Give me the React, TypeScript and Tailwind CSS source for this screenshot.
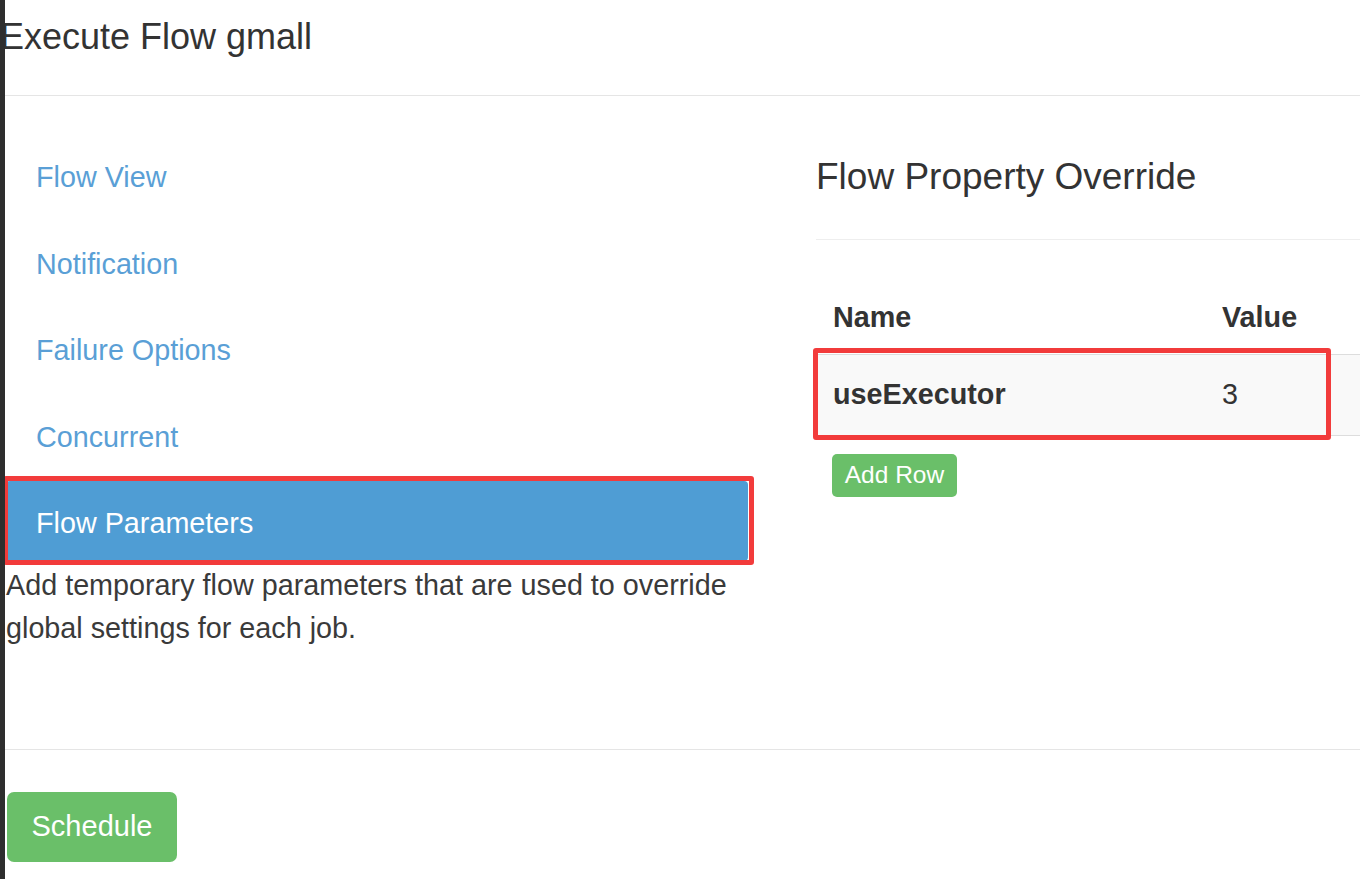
import React from 'react';

const navItems = ['Flow View', 'Notification', 'Failure Options', 'Concurrent', 'Flow Parameters'];

const App: React.FC = () => {
  const active = 'Flow Parameters';

  return (
    <div className="relative h-[879px] w-[1360px] overflow-hidden bg-white font-['Liberation_Sans',Arial,sans-serif] text-[#333]">
      {/* window edge */}
      <div className="absolute left-0 top-0 z-20 h-full w-[5px] bg-[#2e2e2e]" />

      <header className="h-[96px] border-b border-[#e5e5e5] pt-[17px]">
        <h4 className="text-[36px] leading-[40px] text-[#333]">Execute Flow gmall</h4>
      </header>

      <div className="flex h-[654px] border-b border-[#e5e5e5] pl-[6px] pt-[39px]">
        {/* left column */}
        <div className="w-[742px] shrink-0">
          <ul className="flex flex-col gap-[6.5px]">
            {navItems.map(item =>
              item === active ? (
                <li key={item} className="relative">
                  <div className="flex h-[80px] items-center rounded-[4px] bg-[#4f9dd4] px-[30px] pt-[6px] text-[28.75px] text-white">
                    {item}
                  </div>
                  <div className="absolute -left-[3px] -top-[5px] h-[89px] w-[751px] rounded-[3px] border-[5px] border-[#f23b3b]" />
                </li>
              ) : (
                <li key={item} className="flex h-[80px] items-center px-[30px] pt-[6px] text-[28.75px] text-[#5a9fd6]">
                  {item}
                </li>
              )
            )}
          </ul>
          <p className="mt-[3px] text-[28.75px] leading-[43px] text-[#3a3a3a]">
            Add temporary flow parameters that are used to override global settings for each job.
          </p>
        </div>

        {/* right column */}
        <div className="ml-[68px] flex-1">
          <h3 className="mt-[22px] text-[37px] leading-[40px] text-[#333]">Flow Property Override</h3>
          <div className="mt-[42px] border-t border-[#eeeeee]" />

          <div className="mt-[41px]">
            <div className="flex h-[73px] items-center text-[28.75px] font-bold text-[#333]">
              <div className="w-[390px] pl-[17px]">Name</div>
              <div className="pl-[16px]">Value</div>
            </div>
            <div className="relative flex h-[82px] items-center border-y border-[#dddddd] bg-[#f9f9f9] text-[28.75px]">
              <div className="w-[390px] pl-[17px] font-bold">useExecutor</div>
              <div className="pl-[16px]">3</div>
              <div className="absolute -left-[3px] -top-[7px] h-[92px] w-[518px] rounded-[3px] border-[5px] border-[#f23b3b]" />
            </div>
          </div>

          <button className="ml-[16px] mt-[18px] h-[43px] w-[125px] rounded-[5px] bg-[#6abf69] text-[24.5px] text-white">
            Add Row
          </button>
        </div>
      </div>

      <footer className="pl-[7px] pt-[42px]">
        <button className="h-[70px] w-[170px] rounded-[7px] bg-[#6abf69] text-[29px] text-white">
          Schedule
        </button>
      </footer>
    </div>
  );
};

export default App;
